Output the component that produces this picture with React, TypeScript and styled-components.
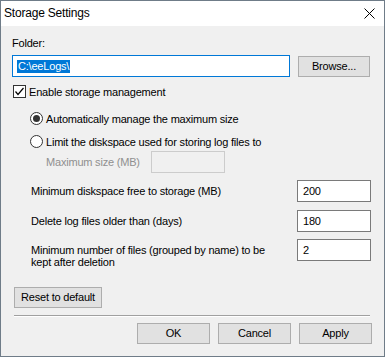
import React from 'react';
import styled, { createGlobalStyle } from 'styled-components';

const GlobalStyle = createGlobalStyle`
  html, body {
    margin: 0;
    padding: 0;
    background: #f0f0f0;
  }
  * {
    box-sizing: border-box;
  }
`;

const Window = styled.div`
  width: 385px;
  height: 357px;
  border: 1px solid #6f7c88;
  background: #f0f0f0;
  display: flex;
  flex-direction: column;
  font-family: 'Liberation Sans', Arial, sans-serif;
  font-size: 11px;
  letter-spacing: -0.2px;
  color: #000;
`;

const TitleBar = styled.div`
  height: 25px;
  background: #fff;
  display: flex;
  align-items: center;
  justify-content: space-between;
  padding: 0 9px 0 3px;
`;

const Title = styled.span`
  font-size: 12px;
  letter-spacing: -0.2px;
  padding-bottom: 1px;
`;

const CloseIcon = styled.svg`
  width: 11px;
  height: 11px;
  margin-top: -1px;
`;

const Body = styled.div`
  flex: 1;
  display: flex;
  flex-direction: column;
  padding: 0 12px 0 11px;
`;

const Label = styled.div<{ $top?: number; $indent?: number; $width?: number; $disabled?: boolean }>`
  line-height: 13px;
  margin-top: ${({ $top }) => $top ?? 0}px;
  margin-left: ${({ $indent }) => $indent ?? 0}px;
  ${({ $width }) => ($width ? `width: ${$width}px;` : '')}
  color: ${({ $disabled }) => ($disabled ? '#8f8f8f' : '#000')};
`;

const Row = styled.div<{ $top: number; $indent?: number; $align?: string; $gap?: number }>`
  display: flex;
  align-items: ${({ $align }) => $align ?? 'center'};
  gap: ${({ $gap }) => $gap ?? 0}px;
  margin-top: ${({ $top }) => $top}px;
  padding-left: ${({ $indent }) => $indent ?? 0}px;
`;

const FolderInput = styled.div`
  width: 278px;
  height: 22px;
  border: 1px solid #0078d7;
  background: #fff;
  display: flex;
  align-items: center;
  padding-left: 4px;
`;

const Selected = styled.span`
  background: #0078d7;
  color: #fff;
  line-height: 13px;
  padding: 0 1px;
`;

const Button = styled.div<{ $width: number; $offset?: number }>`
  width: ${({ $width }) => $width}px;
  height: 21px;
  margin-top: ${({ $offset }) => $offset ?? 0}px;
  border: 1px solid #adadad;
  background: #e1e1e1;
  display: flex;
  align-items: center;
  justify-content: center;
  padding-bottom: 1px;
`;

const CheckBox = styled.div`
  width: 13px;
  height: 13px;
  border: 1px solid #333;
  background: #fff;
  display: flex;
  align-items: center;
  justify-content: center;
  margin-right: 3px;
  margin-left: 1px;
`;

const Radio = styled.div<{ $checked?: boolean }>`
  width: 13px;
  height: 13px;
  border-radius: 50%;
  border: 1px solid #333;
  background: #fff;
  display: flex;
  align-items: center;
  justify-content: center;
  margin-right: 3px;

  &::after {
    content: '';
    display: ${({ $checked }) => ($checked ? 'block' : 'none')};
    width: 7px;
    height: 7px;
    border-radius: 50%;
    background: #333;
  }
`;

const RowLabel = styled.div<{ $top?: number }>`
  width: 285px;
  line-height: 12px;
  padding-left: 19px;
  margin-top: ${({ $top }) => $top ?? 0}px;
`;

const TextBox = styled.div<{ $disabled?: boolean }>`
  width: 74px;
  height: 22px;
  border: 1px solid ${({ $disabled }) => ($disabled ? '#cccccc' : '#7a7a7a')};
  background: ${({ $disabled }) => ($disabled ? '#f0f0f0' : '#fff')};
  display: flex;
  align-items: center;
  padding-left: 5px;
  padding-bottom: 1px;
`;

const Separator = styled.div`
  margin-top: 7px;
  height: 2px;
  margin-left: 2px;
  margin-right: 2px;
  border-top: 1px solid #a0a0a0;
  border-bottom: 1px solid #fff;
`;

const Footer = styled.div`
  display: flex;
  justify-content: flex-end;
  gap: 8px;
  margin-top: 6px;
`;

const settings = [
  { label: 'Minimum diskspace free to storage (MB)', value: '200', top: 7 },
  { label: 'Delete log files older than (days)', value: '180', top: 8 },
];

export default function App() {
  return (
    <>
      <GlobalStyle />
      <Window>
        <TitleBar>
          <Title>Storage Settings</Title>
          <CloseIcon viewBox="0 0 11 11">
            <path d="M0.5 0.5 L10.5 10.5 M10.5 0.5 L0.5 10.5" stroke="#000" strokeWidth="1" fill="none" />
          </CloseIcon>
        </TitleBar>
        <Body>
          <Label $top={11}>Folder:</Label>
          <Row $top={5} $gap={8}>
            <FolderInput>
              <Selected>C:\eeLogs\</Selected>
            </FolderInput>
            <Button $width={72} $offset={1}>Browse...</Button>
          </Row>
          <Row $top={8}>
            <CheckBox>
              <svg width="11" height="11" viewBox="0 0 11 11">
                <path d="M1.5 5.5 L4 8.5 L9.5 2" stroke="#000" strokeWidth="1.2" fill="none" />
              </svg>
            </CheckBox>
            Enable storage management
          </Row>
          <Row $top={14} $indent={18}>
            <Radio $checked />
            Automatically manage the maximum size
          </Row>
          <Row $top={10} $indent={18}>
            <Radio />
            Limit the diskspace used for storing log files to
          </Row>
          <Row $top={3}>
            <Label $indent={34} $width={105} $disabled>Maximum size (MB)</Label>
            <TextBox $disabled />
          </Row>
          {settings.map((s) => (
            <Row key={s.label} $top={s.top}>
              <RowLabel>{s.label}</RowLabel>
              <TextBox>{s.value}</TextBox>
            </Row>
          ))}
          <Row $top={7} $align="flex-start">
            <RowLabel $top={5}>
              Minimum number of files (grouped by name) to be
              <br />
              kept after deletion
            </RowLabel>
            <TextBox>2</TextBox>
          </Row>
          <Row $top={19} $indent={2}>
            <Button $width={88}>Reset to default</Button>
          </Row>
          <Separator />
          <Footer>
            <Button $width={73}>OK</Button>
            <Button $width={73}>Cancel</Button>
            <Button $width={73}>Apply</Button>
          </Footer>
        </Body>
      </Window>
    </>
  );
}
